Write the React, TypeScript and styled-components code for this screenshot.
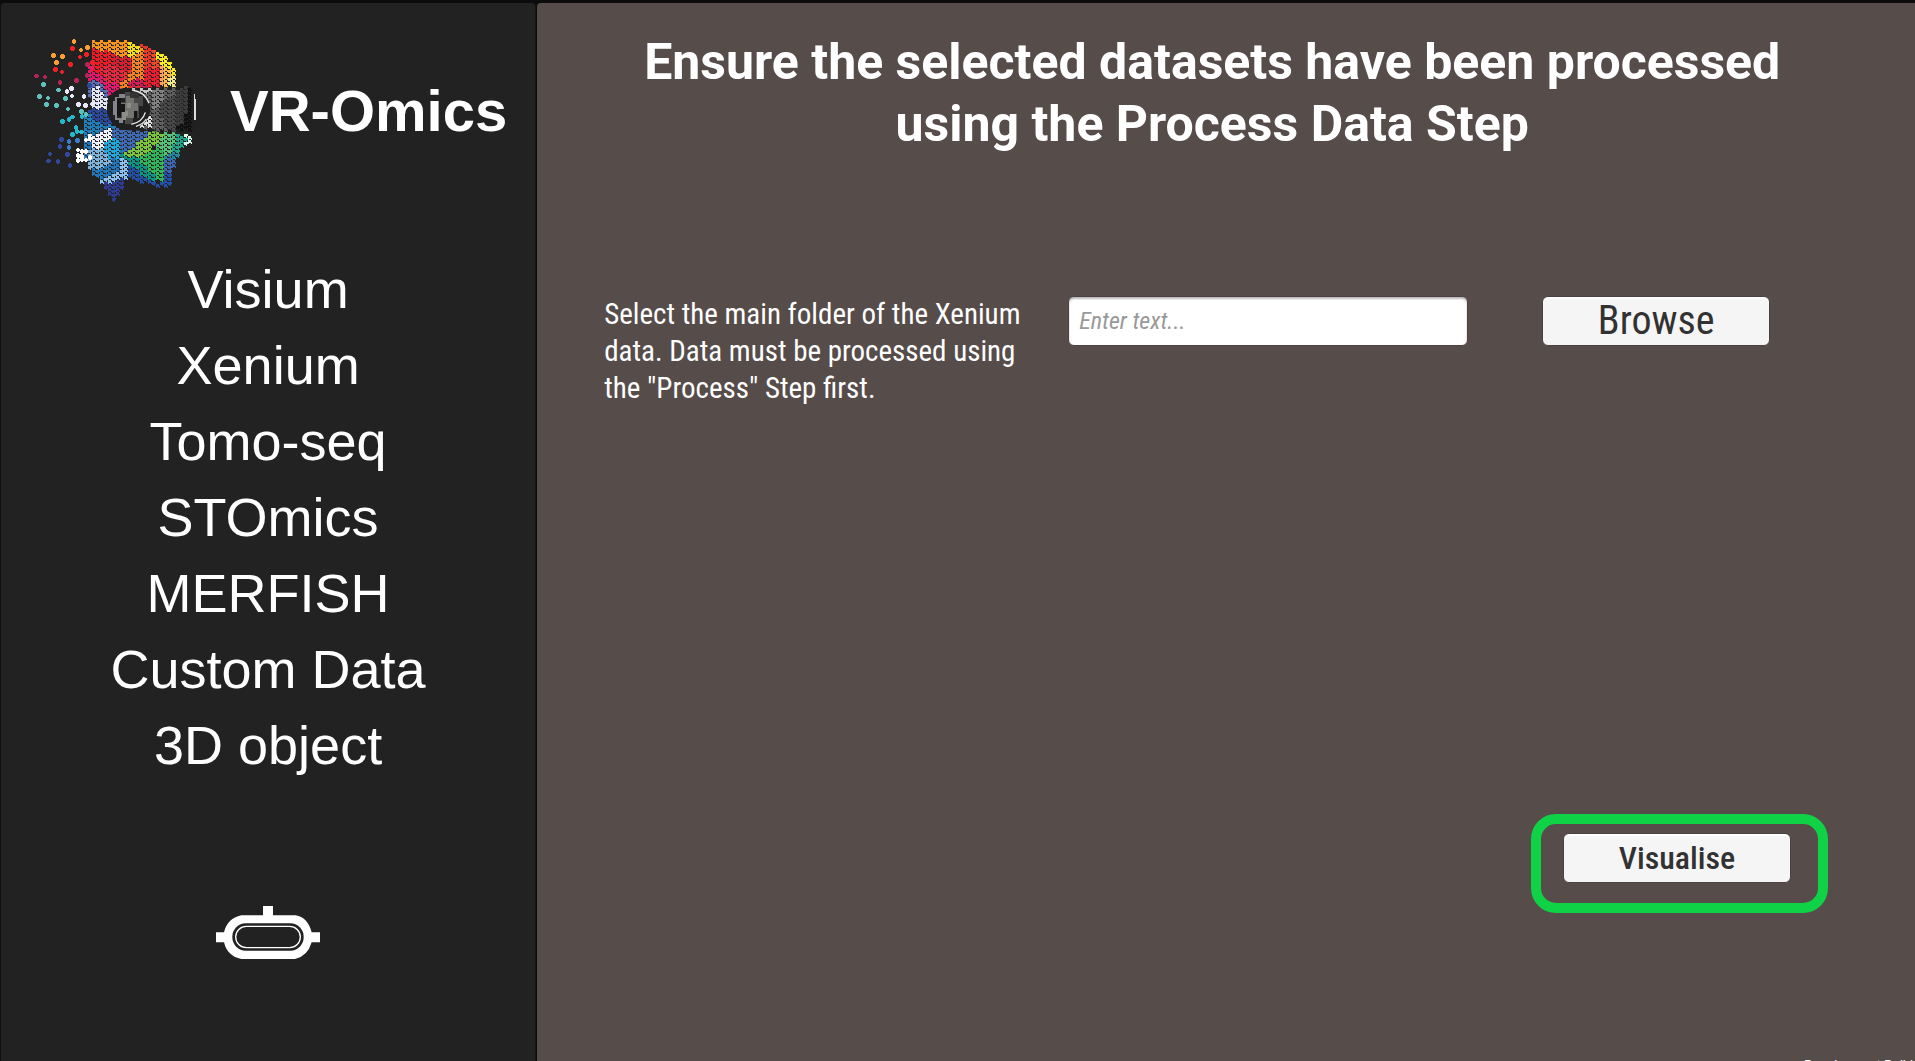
import React from 'react';
import styled, { createGlobalStyle } from 'styled-components';

const wide = "'Liberation Sans', Arial, sans-serif";
const medium = "Roboto, 'Liberation Sans', sans-serif";
const narrow = "'Roboto Condensed', 'Liberation Sans', sans-serif";

const GlobalStyle = createGlobalStyle`
  * { box-sizing: border-box; }
  body { margin: 0; background: #000; }
`;

const Page = styled.div`
  position: relative;
  display: flex;
  min-height: 100vh;
  padding-top: 3px;
  overflow: hidden;
  background: #0c0c0c;
  color: #fff;
`;

const Sidebar = styled.aside`
  flex: 0 0 28%;
  display: flex;
  flex-direction: column;
  align-items: center;
  background: #222;
  border-left: 1px solid #111;
  border-right: 1px solid #151515;
  border-radius: 4px 4px 0 0;
`;

const Brand = styled.header`
  align-self: stretch;
  display: flex;
  align-items: center;
  gap: 20px;
  padding: 22px 0 0 19px;
`;

const BrandName = styled.h1`
  margin: 0;
  padding-bottom: 14px;
  font: 700 58px/64px ${wide};
  white-space: nowrap;
`;

const Menu = styled.nav`
  display: flex;
  flex-direction: column;
  align-items: center;
  margin-top: 41px;
`;

const MenuItem = styled.button`
  padding: 0;
  border: 0;
  background: none;
  color: #fff;
  font: 400 54px/76px ${wide};
  white-space: nowrap;
  cursor: pointer;
`;

const HeadsetButton = styled.button`
  display: flex;
  margin-top: 123px;
  padding: 0;
  border: 0;
  background: none;
  cursor: pointer;
`;

const Main = styled.main`
  flex: 1;
  display: flex;
  flex-direction: column;
  margin-left: 1px;
  padding: 28px 87px 148px 67px;
  background: #564c4a;
  border-radius: 4px 0 0 0;
`;

const Heading = styled.h2`
  max-width: 1216px;
  margin: 0;
  text-align: center;
  font: 700 50px/62px ${medium};
`;

const FolderRow = styled.div`
  display: grid;
  grid-template-columns: 427fr 399fr 323fr;
  column-gap: 36px;
  align-items: start;
  margin-top: 141px;
`;

const FolderLabel = styled.label`
  font: 400 29px/37px ${narrow};
`;

const PathInput = styled.input`
  width: 100%;
  height: 50px;
  padding: 0 10px;
  border: 1px solid #4a4140;
  border-radius: 6px;
  background: #fff;
  box-shadow: inset 0 2px 2px #bbb;
  color: #323232;
  font: 400 24px/32px ${narrow};
  &::placeholder {
    color: #999;
    opacity: 1;
    font-style: italic;
  }
`;

const Button = styled.button<{ $bold?: boolean }>`
  width: 228px;
  height: 50px;
  padding: 0;
  border: 1px solid #4a4140;
  border-radius: 6px;
  background: #f5f5f5;
  box-shadow: inset 0 2px 1px #fff;
  color: #323232;
  font: ${p => (p.$bold ? `500 32px/46px ${narrow}` : `400 40px/46px ${narrow}`)};
  cursor: pointer;
`;

const BrowseCell = styled.div`
  padding-left: 38px;
`;

const Highlight = styled.div`
  align-self: flex-end;
  margin-top: auto;
  padding: 9px 27px 20px 22px;
  border: 10px solid #10d246;
  border-radius: 25px;
`;

const BuildTag = styled.div`
  position: absolute;
  right: 2px;
  bottom: -11px;
  font: 400 13px/15px ${wide};
  white-space: nowrap;
`;

type Region = [string, string];

const regions: Region[] = [
  ['#e8382a', '216,50 330,50 408,78 440,105 466,140 468,180 385,188 300,195 270,212 250,195 216,180'],
  ['#f7941d', '216,50 330,50 368,66 368,95 330,105 290,95 216,66'],
  ['#ed1c24', '216,60 245,75 290,95 300,130 240,165 216,130'],
  ['#d6202f', '282,92 330,98 335,140 282,125'],
  ['#e5186d', '204,120 240,150 262,168 302,178 310,194 270,214 250,198 204,172'],
  ['#e5283f', '240,130 282,120 320,150 300,178 260,170'],
  ['#f58220', '345,90 368,75 368,165 305,190 305,172 330,150'],
  ['#f0dc1e', '318,54 355,60 355,90 320,106'],
  ['#e84a2a', '392,78 410,80 420,100 418,150 392,130'],
  ['#d61c55', '318,186 345,165 385,165 385,190'],
  ['#ed1c2e', '368,135 420,130 420,186 368,186'],
  ['#f5ee1c', '406,78 440,100 468,140 468,165 440,130 418,122'],
  ['#fba05a', '418,118 434,128 434,184 418,184'],
  ['#f9b83e', '434,126 446,130 460,165 446,184 434,184'],
  ['#f4e88c', '444,160 468,150 468,184 444,184'],
  ['#5a6fb5', '204,168 242,168 268,212 264,250 218,250 204,190'],
  ['#e4e6f5', '216,182 242,190 262,225 262,250 218,250'],
  ['#2b4a9e', '204,250 264,250 280,310 204,300'],
  ['#1f7fba', '192,262 206,270 240,290 290,310 290,350 192,350'],
  ['#3f6ab4', '240,310 400,320 400,350 310,395 250,350'],
  ['#2277ba', '192,340 320,380 320,470 245,470 205,430'],
  ['#3a7cc2', '195,370 215,370 215,400 195,400'],
  ['#7eb4dc', '206,375 262,370 280,410 250,435 215,435 206,430'],
  ['#1ea8dc', '255,340 292,335 305,400 270,405 255,375'],
  ['#f2f2ff', '270,306 282,310 270,345 240,372 222,372 205,350 205,330 240,330'],
  ['#56be78', '420,322 472,322 472,350 460,395 432,400 405,375'],
  ['#7cc43c', '395,320 440,322 420,350 400,365 375,395 318,395 318,385'],
  ['#32b45a', '370,395 410,365 432,385 434,475 395,445 345,400'],
  ['#0c9484', '305,390 345,395 385,430 408,455 400,470 340,430 312,415'],
  ['#20a48c', '472,328 515,332 515,360 482,366 474,390 460,390 460,360'],
  ['#d8f8e4', '496,330 516,330 516,362 482,366 505,350'],
  ['#2486a0', '446,388 480,380 480,398 460,408 434,400'],
  ['#3f66b0', '432,405 464,405 464,430 452,446 432,446'],
  ['#2050a8', '318,415 345,435 400,468 434,476 434,445 452,445 452,480 432,490 320,462'],
  ['#8cc0ee', '306,404 320,410 320,462 290,472 245,474 245,465 306,435'],
  ['#2c3c94', '240,474 280,472 300,464 320,466 284,530'],
];

const shades: Region[] = [
  ['#5f5f5f', '365,196 415,190 470,190 470,318 400,316 365,310'],
  ['#808080', '392,192 428,190 428,230 405,260 392,250'],
  ['#484848', '415,240 470,215 470,318 440,318'],
  ['#3c3c3c', '464,190 510,188 510,318 464,318'],
  ['#101010', '506,188 522,188 522,320 470,320 470,300 495,290'],
  ['#e0e0e0', '362,270 392,270 392,306 342,306'],
  ['#c4c4c4', '330,190 392,190 392,206 365,206'],
];

const inside = (x: number, y: number, points: string) => {
  const p = points.split(' ').map(s => s.split(',').map(Number));
  let hit = false;
  for (let i = 0, j = p.length - 1; i < p.length; j = i++) {
    const [xi, yi] = p[i];
    const [xj, yj] = p[j];
    if (yi > y !== yj > y && x < ((xj - xi) * (y - yi)) / (yj - yi) + xi) hit = !hit;
  }
  return hit;
};

const CELL = 12;

const Mosaic = ({ list }: { list: Region[] }) => {
  const cells: React.ReactNode[] = [];
  for (let i = 0; i < 30; i++) {
    for (let j = 0; j < 42; j++) {
      const x = 192 + i * CELL;
      const y = 45 + j * CELL + (i % 2) * 6;
      const found = list.filter(([, pts]) => inside(x + 6, y + 6, pts)).pop();
      if (!found) continue;
      const seam = i % 2 ? 6 : 0;
      cells.push(
        <g key={`${i}-${j}`}>
          <path fill={found[0]} d={`M${x} ${y}h12v12h-12z`} />
          <path
            fill="#242424"
            d={`M${x + 9} ${y + seam}h3v6h-3zM${x + (i % 2 ? 0 : 3)} ${y + 9}h6v3h-6z`}
          />
        </g>,
      );
    }
  }
  return <>{cells}</>;
};

const dots: [string, number[][]][] = [
  ['#fba030', [[162, 49], [183, 75], [203, 68], [101, 91], [127, 94], [110, 112]]],
  ['#ee2028', [[158, 70], [180, 96], [200, 89], [151, 118], [106, 133], [126, 141], [218, 113]]],
  ['#b42458', [[49, 153], [75, 156], [120, 173], [170, 166], [201, 152], [203, 119]]],
  ['#e8186a', [[215, 129]]],
  ['#60c0bc', [[70, 178], [115, 195], [58, 215], [84, 219], [137, 220], [80, 239], [109, 241], [144, 252], [185, 259], [198, 268]]],
  ['#e8e8f8', [[154, 190], [141, 199], [156, 213], [192, 214], [175, 238], [197, 241], [218, 237]]],
  ['#24b8cc', [[158, 276], [186, 275], [127, 289], [147, 284], [168, 307], [171, 319], [158, 328], [185, 321]]],
  ['#3c7cc8', [[147, 349], [172, 346], [147, 367]]],
  ['#30489c', [[125, 343], [120, 364], [90, 387], [142, 388], [85, 408], [114, 409], [150, 421], [209, 181]]],
  ['#fff', [[174, 375], [186, 380], [174, 391], [185, 394], [174, 407], [186, 404], [198, 405], [210, 397], [198, 345], [210, 340], [198, 380]]],
];

const Logo = () => (
  <svg width="190" height="185" viewBox="0 0 570 555" role="img" aria-label="VR-Omics logo">
    <g shapeRendering="crispEdges">
      <Mosaic list={regions} />
      {dots.map(([fill, points]) =>
        points.map(([x, y]) => (
          <path
            key={`${x}-${y}`}
            fill={fill}
            d={`M${x - 4} ${y - 7}h8v3h3v8h-3v3h-8v-3h-3v-8h3z`}
          />
        )),
      )}
    </g>
    <path fill="#202020" d="M312 189 510 186q16 2 16 20v95q0 16-14 18l-40 3-148-6q-32 0-52-28-14-22-11-46 5-46 51-53z" />
    <g shapeRendering="crispEdges">
      <Mosaic list={shades} />
      <path fill="#dcdcdc" d="M521 208h4v14h3v40h-1v24h-5v-30h-1z" />
    </g>
    <ellipse cx="327" cy="252" rx="64" ry="59" fill="#202020" />
    <g shapeRendering="crispEdges">
      <path fill="#85858d" d="M298 206h18v14h-12v20h-12v40h18v15h-14v-10h-10v-14h-8v-42h8v-14h10z" />
      <path fill="#484848" d="M316 200h34v12h18v30h-12v36h-16v18h-24v-16h-14v-50h14z" />
      <path fill="#747470" d="M318 212h24v22h12v24h-12v22h-24v-22h-14v-24h14z" />
      <path fill="#8f8f8a" d="M306 258h18v14h-6v12h-12zM320 234h12v14h-12z" />
      <path fill="#151515" d="M292 220h12v18h12v24h-12v12h-12zM342 258h10v20h-10z" />
      <path fill="#333" d="M330 200h26v18h-26z" />
    </g>
    <path fill="none" stroke="#e8e8e8" strokeWidth="4" d="M334 298q34-7 42-36M336 195q38 5 51 40M348 304q22-7 31-22" />
  </svg>
);

const Headset = () => (
  <svg width="104" height="53" viewBox="48 44 312 159" aria-hidden="true">
    <path fill="#fff" d="M189 44h30v28h68q36 6 48 51h25v30h-25q-12 42-50 50H124q-42-8-52-50H48v-30h24q10-42 52-51h65z" />
    <rect x="97" y="96" width="214" height="82" rx="40" fill="#222" />
    <rect x="107" y="105" width="194" height="64" rx="32" fill="none" stroke="#fff" strokeWidth="4" />
  </svg>
);

const datasets = ['Visium', 'Xenium', 'Tomo-seq', 'STOmics', 'MERFISH', 'Custom Data', '3D object'];

export default function App() {
  return (
    <>
      <GlobalStyle />
      <Page>
        <Sidebar>
          <Brand>
            <Logo />
            <BrandName>VR-Omics</BrandName>
          </Brand>
          <Menu>
            {datasets.map(name => (
              <MenuItem key={name} type="button">{name}</MenuItem>
            ))}
          </Menu>
          <HeadsetButton type="button" aria-label="VR mode">
            <Headset />
          </HeadsetButton>
        </Sidebar>
        <Main>
          <Heading>Ensure the selected datasets have been processed using the Process Data Step</Heading>
          <FolderRow>
            <FolderLabel htmlFor="folder">
              Select the main folder of the Xenium data. Data must be processed using the "Process" Step first.
            </FolderLabel>
            <PathInput id="folder" type="text" placeholder="Enter text..." />
            <BrowseCell>
              <Button type="button">Browse</Button>
            </BrowseCell>
          </FolderRow>
          <Highlight>
            <Button type="button" $bold>Visualise</Button>
          </Highlight>
        </Main>
        <BuildTag>Development Build</BuildTag>
      </Page>
    </>
  );
}
